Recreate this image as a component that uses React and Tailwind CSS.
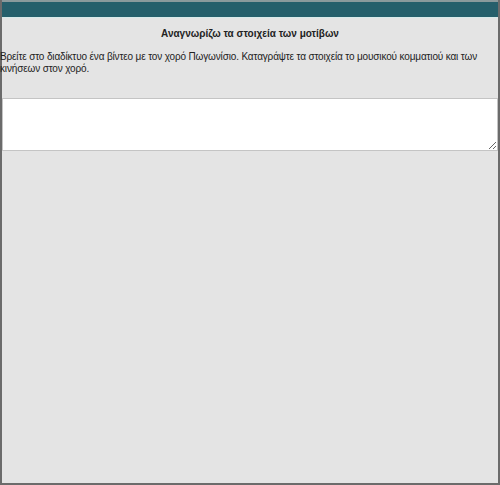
import React from "react";

const App = () => {
  return (
    <div
      className="w-[500px] h-[485px] bg-[#e4e4e4] border-2 border-t-0 border-[#6b6b6b] flex flex-col"
      style={{ fontFamily: '"Liberation Sans", Arial, sans-serif' }}
    >
      <div className="h-[18px] bg-[#255f6b] border-t-2 border-[#8a9a9c] border-b border-b-[#d7eaea]" />
      <h3 className="mt-[8px] text-center text-[10px] font-bold text-[#222]">
        Αναγνωρίζω τα στοιχεία των μοτίβων
      </h3>
      <p className="-ml-[2px] mt-[10px] text-[10px] tracking-[-0.15px] leading-[12px] text-[#222] whitespace-nowrap">
        Βρείτε στο διαδίκτυο ένα βίντεο με τον χορό Πωγωνίσιο. Καταγράψτε τα στοιχεία το μουσικού κομματιού και των
        <br />
        κινήσεων στον χορό.
      </p>
      <textarea
        className="mt-[23px] h-[53px] w-full bg-white border border-[#c4c4c4] resize-y outline-none"
        defaultValue=""
      />
    </div>
  );
};

export default App;
